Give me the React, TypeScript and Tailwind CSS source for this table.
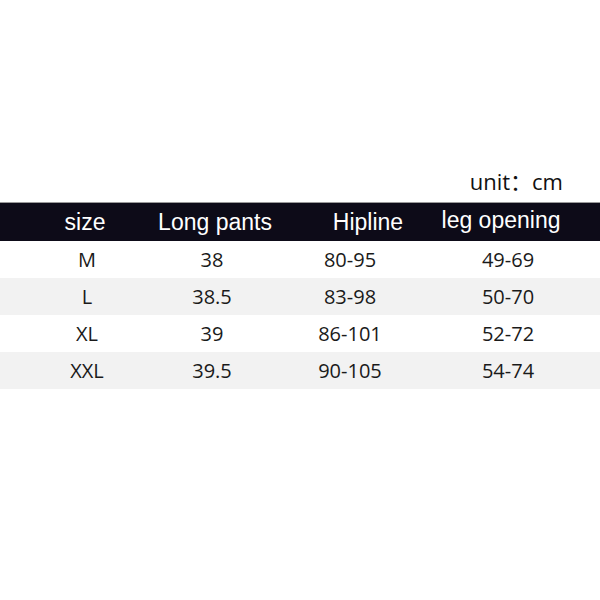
import React from "react";

const rows = [
  ["M", "38", "80-95", "49-69"],
  ["L", "38.5", "83-98", "50-70"],
  ["XL", "39", "86-101", "52-72"],
  ["XXL", "39.5", "90-105", "54-74"],
];

const cols = "grid grid-cols-[174px_76px_200px_116px]";

export default function App() {
  return (
    <div className="w-[600px] h-[600px] bg-white flex flex-col">
      <div className="h-[167px]" />
      <div
        className="h-[28px] flex items-center justify-end pr-[37px] text-[22px] text-[#111] leading-none"
        style={{ fontFamily: '"Open Sans", "Noto Sans CJK SC", sans-serif' }}
      >
        unit：cm
      </div>
      <div className="h-[7px]" />
      <div
        className={`${cols} h-[39px] bg-[#0d0b18] border-t border-[#9a9a9a] text-white text-[23px] items-center`}
        style={{ fontFamily: '"Liberation Sans", Arial, sans-serif' }}
      >
        <div className="flex justify-center pr-[4px] whitespace-nowrap">size</div>
        <div className="flex justify-center pl-[6px] whitespace-nowrap">Long pants</div>
        <div className="flex justify-center pl-[36px] whitespace-nowrap">Hipline</div>
        <div className="flex justify-center pr-[14px] whitespace-nowrap -mt-[3px]">leg opening</div>
      </div>
      <div style={{ fontFamily: '"Open Sans", sans-serif' }}>
        {rows.map((r, i) => (
          <div
            key={i}
            className={`${cols} h-[37px] items-center text-[20px] text-[#1a1a1a] ${
              i % 2 === 1 ? "bg-[#f2f2f2]" : "bg-white"
            }`}
          >
            {r.map((c, j) => (
              <div key={j} className="flex justify-center whitespace-nowrap">
                {c}
              </div>
            ))}
          </div>
        ))}
      </div>
    </div>
  );
}
